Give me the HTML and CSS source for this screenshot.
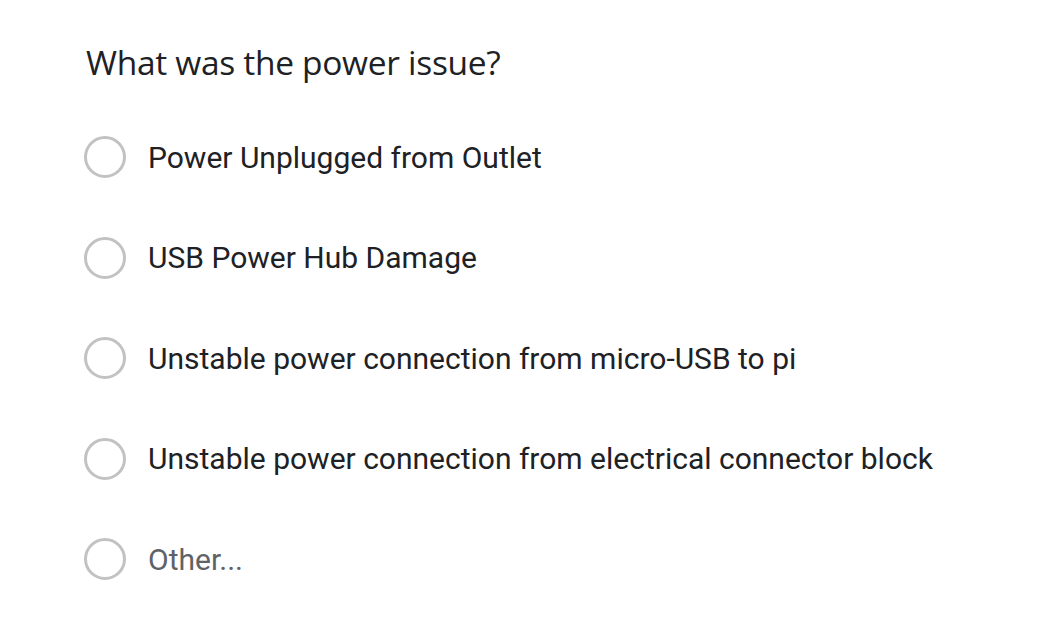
FILE: index.html
```html
<!DOCTYPE html>
<html>
<head>
<meta charset="utf-8">
<link rel="stylesheet" href="styles.css">
</head>
<body>
<div class="form">
  <div class="title">What was the power issue?</div>
  <div class="options">
    <label class="option"><span class="radio"></span><span class="label">Power Unplugged from Outlet</span></label>
    <label class="option"><span class="radio"></span><span class="label">USB Power Hub Damage</span></label>
    <label class="option"><span class="radio"></span><span class="label">Unstable power connection from micro-USB to pi</span></label>
    <label class="option"><span class="radio"></span><span class="label">Unstable power connection from electrical connector block</span></label>
    <label class="option"><span class="radio"></span><span class="label other">Other...</span></label>
  </div>
</div>
</body>
</html>
```

FILE: styles.css
```css
html, body {
  margin: 0;
  padding: 0;
  background: #fff;
}
.form {
  padding: 40px 0 0 86px;
  font-family: Roboto, "Liberation Sans", sans-serif;
}
.title {
  font-family: "Open Sans", Roboto, sans-serif;
  font-size: 33.5px;
  line-height: 44px;
  color: #202124;
  letter-spacing: -0.3px;
}
.options {
  display: flex;
  flex-direction: column;
  margin-top: 52px;
  margin-left: -2px;
  gap: 58.5px;
}
.option {
  display: flex;
  align-items: center;
  height: 42px;
}
.radio {
  width: 36px;
  height: 36px;
  border: 3px solid #c2c2c2;
  border-radius: 50%;
  flex: none;
}
.label {
  margin-left: 22px;
  font-size: 30px;
  color: #202124;
}
.label.other {
  color: #5f6368;
}
```
